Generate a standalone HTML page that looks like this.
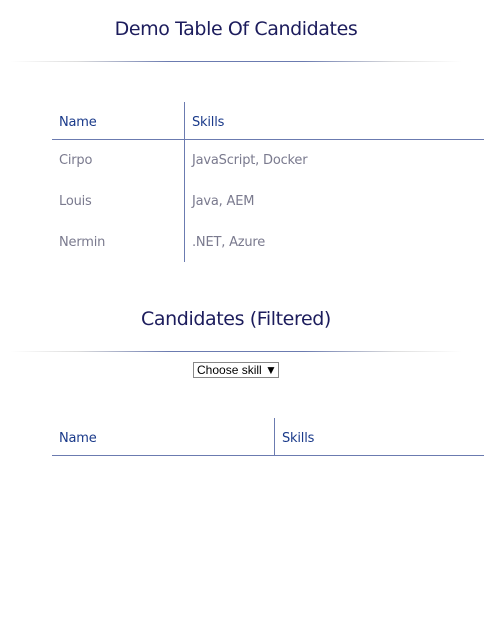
<!DOCTYPE html>
<html><head><style>
body{margin:0;width:490px;height:623px;background:#fff;font-family:"DejaVu Sans","Liberation Sans",sans-serif;position:relative;overflow:hidden}
.a{position:absolute}
h1{position:absolute;margin:0;font-weight:normal;font-size:19px;color:#1c1c5c;left:0;width:472px;text-align:center;letter-spacing:-0.4px}
.hr{position:absolute;left:10px;width:452px;height:1px;background:linear-gradient(90deg,#fff,#ddd 15%,#6b7bb0 35%,#6b7bb0 65%,#ddd 85%,#fff)}
.t{position:absolute;font-size:13px;line-height:16px;letter-spacing:-0.2px}
.h{color:#1a3a8a}
.c{color:#7a7a8e}
.v{position:absolute;width:1px;background:#6b7bb0}
.l{position:absolute;height:1px;background:#6b7bb0}
</style></head><body>
<h1 style="top:18px">Demo Table Of Candidates</h1>
<div class="hr" style="top:61px"></div>
<div class="v" style="left:184px;top:102px;height:160px"></div>
<div class="l" style="left:52px;width:432px;top:139px"></div>
<div class="t h" style="left:59px;top:115px">Name</div>
<div class="t h" style="left:192px;top:115px">Skills</div>
<div class="t c" style="left:59px;top:153px">Cirpo</div>
<div class="t c" style="left:192px;top:153px">JavaScript, Docker</div>
<div class="t c" style="left:59px;top:194px">Louis</div>
<div class="t c" style="left:192px;top:194px">Java, AEM</div>
<div class="t c" style="left:59px;top:235px">Nermin</div>
<div class="t c" style="left:192px;top:235px">.NET, Azure</div>
<h1 style="top:308px">Candidates (Filtered)</h1>
<div class="hr" style="top:351px"></div>
<div class="a" style="left:193px;top:362px;height:14px;border:1px solid #888;font-family:'Liberation Sans',sans-serif;font-size:12px;line-height:14px;color:#000;padding-left:3px;width:81px">Choose skill ▼</div>
<div class="v" style="left:274px;top:418px;height:37px"></div>
<div class="l" style="left:52px;width:432px;top:455px"></div>
<div class="t h" style="left:59px;top:431px">Name</div>
<div class="t h" style="left:282px;top:431px">Skills</div>
</body></html>
